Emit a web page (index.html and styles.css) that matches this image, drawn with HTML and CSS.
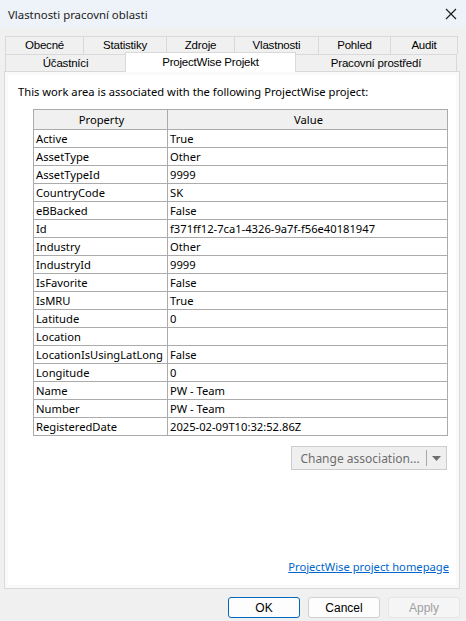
FILE: index.html
```html
<!DOCTYPE html>
<html>
<head>
<meta charset="utf-8">
<link rel="stylesheet" href="styles.css">
</head>
<body>
<div class="dialog">
  <div class="titlebar">
    <span class="title">Vlastnosti pracovní oblasti</span>
    <svg class="close" width="12" height="12" viewBox="0 0 12 12"><path d="M1 1 L11 11 M11 1 L1 11" stroke="#1a1a1a" stroke-width="1.1" fill="none"/></svg>
  </div>
  <div class="tabs">
    <div class="tabrow row1">
      <div class="tab w1">Obecné</div>
      <div class="tab w2">Statistiky</div>
      <div class="tab w3">Zdroje</div>
      <div class="tab w4">Vlastnosti</div>
      <div class="tab w5">Pohled</div>
      <div class="tab w6">Audit</div>
    </div>
    <div class="tabrow row2">
      <div class="tab w7">Účastníci</div>
      <div class="tab w8 selected">ProjectWise Projekt</div>
      <div class="tab w9">Pracovní prostředí</div>
    </div>
  </div>
  <div class="panel">
    <p class="intro">This work area is associated with the following ProjectWise project:</p>
    <table class="grid">
      <thead>
        <tr><th class="c1">Property</th><th class="c2">Value</th></tr>
      </thead>
      <tbody>
        <tr><td>Active</td><td>True</td></tr>
        <tr><td>AssetType</td><td>Other</td></tr>
        <tr><td>AssetTypeId</td><td>9999</td></tr>
        <tr><td>CountryCode</td><td>SK</td></tr>
        <tr><td>eBBacked</td><td>False</td></tr>
        <tr><td>Id</td><td>f371ff12-7ca1-4326-9a7f-f56e40181947</td></tr>
        <tr><td>Industry</td><td>Other</td></tr>
        <tr><td>IndustryId</td><td>9999</td></tr>
        <tr><td>IsFavorite</td><td>False</td></tr>
        <tr><td>IsMRU</td><td>True</td></tr>
        <tr><td>Latitude</td><td>0</td></tr>
        <tr><td>Location</td><td></td></tr>
        <tr><td>LocationIsUsingLatLong</td><td>False</td></tr>
        <tr><td>Longitude</td><td>0</td></tr>
        <tr><td>Name</td><td>PW - Team</td></tr>
        <tr><td>Number</td><td>PW - Team</td></tr>
        <tr><td>RegisteredDate</td><td>2025-02-09T10:32:52.86Z</td></tr>
      </tbody>
    </table>
    <div class="actions">
      <div class="splitbtn">
        <span class="splitlabel">Change association...</span>
        <span class="splitsep"></span>
        <svg class="splitarrow" width="9" height="5" viewBox="0 0 9 5"><path d="M0 0 H9 L4.5 5 Z" fill="#6f6f6f"/></svg>
      </div>
    </div>
    <div class="spacer"></div>
    <div class="linkrow"><a class="link" href="#">ProjectWise project homepage</a></div>
  </div>
  <div class="buttons">
    <button class="btn default">OK</button>
    <button class="btn">Cancel</button>
    <button class="btn disabled">Apply</button>
  </div>
</div>
</body>
</html>
```
FILE: styles.css
```css
html, body {
  margin: 0;
  padding: 0;
}
body {
  width: 466px;
  height: 621px;
  background: #f0f0f0;
  overflow: hidden;
}
.dialog {
  width: 466px;
  height: 621px;
  display: flex;
  flex-direction: column;
  font-family: "Segoe UI", "Noto Sans", sans-serif;
  font-size: 11.2px;
  color: #000;
}
.titlebar {
  height: 28px;
  background: #eef2f9;
  display: flex;
  align-items: center;
  padding-left: 8px;
  padding-right: 8px;
  box-sizing: border-box;
}
.title {
  flex: 1;
  font-size: 11.4px;
  color: #1a1a1a;
}
.close {
  margin-right: 1px;
}
.tabs {
  margin-top: 8px;
  padding-left: 5px;
  display: flex;
  flex-direction: column;
  font-family: "Liberation Sans", Arial, sans-serif;
  font-size: 11.5px;
  position: relative;
  z-index: 2;
}
.tabrow {
  display: flex;
}
.tab {
  box-sizing: border-box;
  height: 18px;
  border: 1px solid #d9d9d9;
  border-bottom: none;
  border-right: none;
  background: #f0f0f0;
  text-align: center;
  line-height: 17px;
  color: #000;
  letter-spacing: -0.2px;
}
.tab:last-child {
  border-right: 1px solid #d9d9d9;
}
.row2 .tab {
  height: 17px;
  line-height: 17px;
}
.w1 { width: 78px; }
.w2 { width: 83px; }
.w3 { width: 68px; }
.w4 { width: 84px; }
.w5 { width: 72px; }
.w6 { width: 68px; }
.w7 { width: 120px; }
.w8 { width: 171px; }
.w9 { width: 162px; }
.tab.selected {
  background: #fff;
  height: 20px;
  margin-top: -2px;
  margin-bottom: -1px;
  line-height: 18px;
  border-right: 1px solid #d9d9d9;
  margin-right: -1px;
  position: relative;
  z-index: 3;
}
.panel {
  margin-left: 4px;
  width: 456px;
  height: 518px;
  box-sizing: border-box;
  border: 1px solid #d9d9d9;
  background: #fff;
  box-shadow: inset 0 0 0 3px #f9f9f9;
  display: flex;
  flex-direction: column;
  padding: 0 10px 0 13px;
  position: relative;
  z-index: 1;
}
.intro {
  margin: 12px 0 0 0;
  line-height: 16px;
}
.grid {
  margin-top: 9px;
  margin-left: 15px;
  border-collapse: collapse;
  width: 415px;
  table-layout: fixed;
}
.grid th, .grid td {
  border: 1px solid #ababab;
  padding: 0 0 0 2px;
  height: 17px;
  line-height: 16px;
  font-weight: normal;
  white-space: nowrap;
  overflow: hidden;
}
.grid th {
  background: #f0f0f0;
  text-align: center;
  height: 19px;
}
.grid .c1 { width: 131px; }
.actions {
  display: flex;
  justify-content: flex-end;
  margin-top: 10px;
  padding-right: 2px;
}
.splitbtn {
  width: 156px;
  height: 24px;
  box-sizing: border-box;
  border: 1px solid #cccccc;
  background: #efefef;
  display: flex;
  align-items: center;
}
.splitlabel {
  width: 134px;
  text-align: center;
  color: #6d6d6d;
  padding-left: 2px;
  box-sizing: border-box;
  font-size: 12px;
}
.splitsep {
  width: 1px;
  height: 16px;
  background: #a8a8a8;
}
.splitarrow {
  margin-left: 5px;
}
.spacer {
  flex: 1;
}
.linkrow {
  display: flex;
  justify-content: flex-end;
  margin-bottom: 13px;
}
.link {
  color: #0066cc;
  text-decoration: underline;
  line-height: 16px;
}
.buttons {
  display: flex;
  justify-content: flex-end;
  gap: 8px;
  margin-top: 8px;
  padding-right: 6px;
}
.btn {
  width: 72px;
  height: 21px;
  box-sizing: border-box;
  border: 1px solid #d0d0d0;
  border-radius: 3px;
  background: #fdfdfd;
  font-family: "Liberation Sans", Arial, sans-serif;
  font-size: 12px;
  color: #000;
  padding: 0;
}
.btn.default {
  border-color: #0067c0;
}
.btn.disabled {
  background: #f5f5f5;
  border-color: #e5e5e5;
  color: #a0a0a0;
}
```
